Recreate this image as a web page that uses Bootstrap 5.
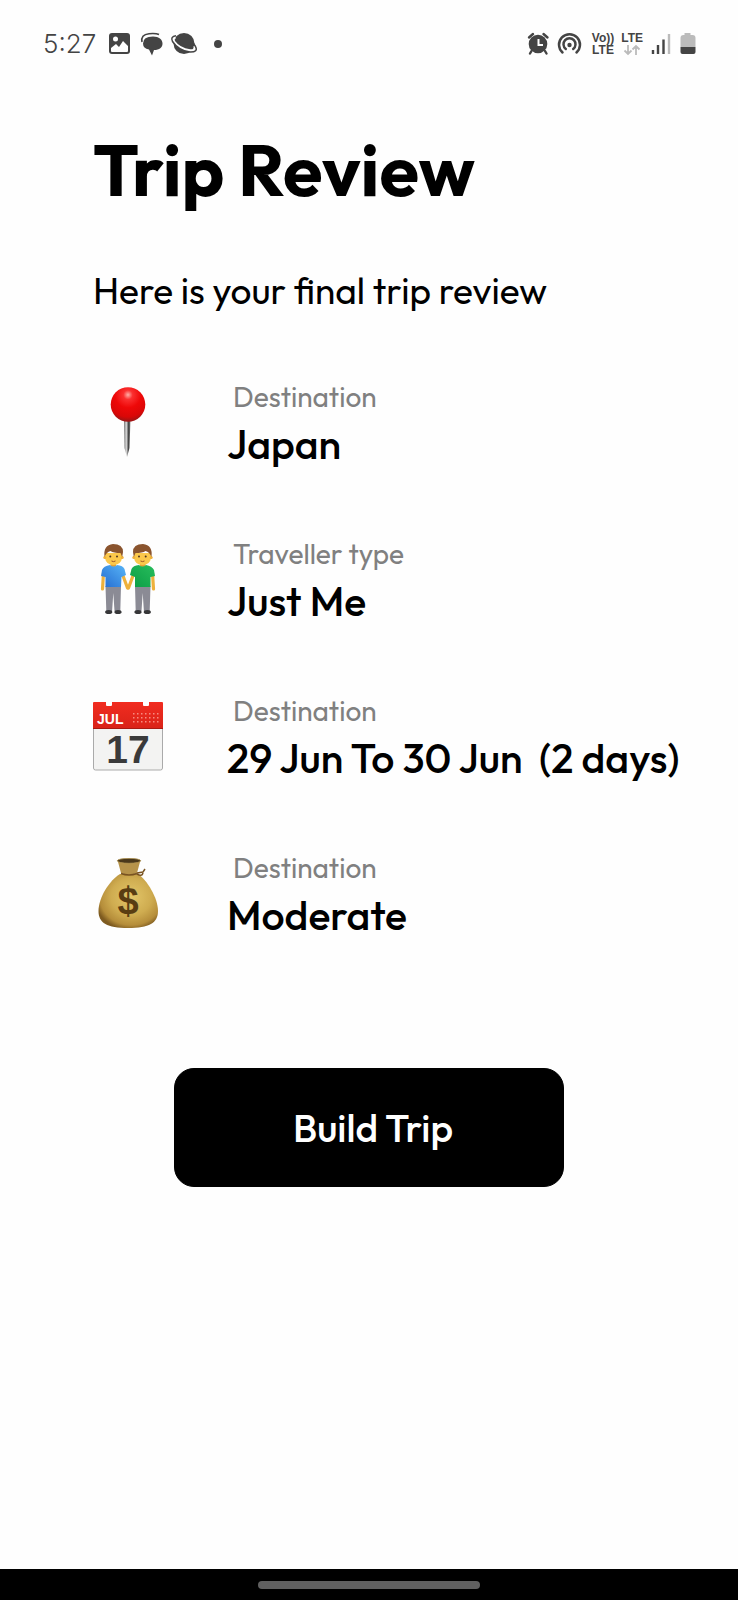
<!DOCTYPE html>
<html lang="en">
<head>
<meta charset="utf-8">
<meta name="viewport" content="width=device-width, initial-scale=1">
<title>Trip Review</title>
<link href="https://cdn.jsdelivr.net/npm/bootstrap@5.3.0/dist/css/bootstrap.min.css" rel="stylesheet">
<style>
  body { font-family: Outfit, Lato, "Open Sans", sans-serif; background: #fefefe; color: #000; }
  .status-bar { height: 88px; padding: 0 41px 0 43px; color: #444; font-family: Inter, Roboto, sans-serif; }
  .status-time { font: 300 26px/32px Inter, sans-serif; color: #444; }
  .network-label { font: 700 12px/12px "Liberation Sans", sans-serif; margin-left: 7px; }
  .screen { padding: 37px 24px 0 93px; }
  .screen-title { font-size: 72px; line-height: 90px; font-weight: 700; }
  .screen-intro { font-size: 37px; line-height: 46px; margin-top: 53px; }
  .review-list { margin-top: 64px; gap: 66px; }
  .review-item { gap: 64px; }
  .review-icon { width: 70px; height: 70px; margin-top: 9px; }
  .review-label { font-size: 28px; line-height: 38px; color: #808080; padding-left: 6px; margin-bottom: 3px; }
  .review-value { font-size: 41px; line-height: 50px; font-weight: 500; white-space: pre-wrap; }
  .build-wrap { margin: 128px 0 40px; }
  .btn-build { max-width: 390px; padding: 33px 20px 33px 28px; border-radius: 20px; font-size: 39px; line-height: 51px; font-weight: 500;
    --bs-btn-color: #fff; --bs-btn-bg: #000; --bs-btn-border-color: #000; --bs-btn-hover-color: #fff; --bs-btn-hover-bg: #222; }
  .gesture-bar { height: 31px; background: #000; }
  .gesture-pill { width: 30%; height: 8px; background: #606060; }
</style>
</head>
<body class="d-flex flex-column min-vh-100">
<header class="status-bar d-flex align-items-center justify-content-between">
  <div class="d-flex align-items-center">
    <span class="status-time">5:27</span>
    <svg class="ms-2" width="120" height="24" viewBox="0 0 120 24" fill="#444" aria-hidden="true">
      <rect x="5" y="1" width="21" height="21" rx="3"/>
      <circle cx="11.500" cy="7" r="2.500" fill="#fefefe"/>
      <path d="M7 19v-3l5-4 3 3 4-6 5 5v5q0 1-1 1H8q-1 0-1-1z" fill="#fefefe"/>
      <path d="M39 11.500q0-7 10-7c6 0 9.500 3 9.500 7s-3 6.500-8.500 6.500l-2 5.500-3-6q-6-1-6-6z"/>
      <path d="M38 10q-1.500-7.500 7-8.300 7-.6 10 .8" fill="none" stroke="#444" stroke-width="1.600"/>
      <circle cx="80" cy="11.500" r="10.500"/>
      <path d="M71.500 5.500q-3.500.5-1.500 4.200C73 14 79 17.500 86 18.500q7 .5 4.500-4.500" fill="none" stroke="#fefefe" stroke-width="2.600"/>
      <path d="M72 3.800q-6 .700-3.500 5.700C72 15 79 19.500 86 20q8.500 .2 5.500-5.500l-2-3" fill="none" stroke="#444" stroke-width="1.500"/>
      <circle cx="114" cy="12" r="4"/>
    </svg>
  </div>
  <div class="d-flex align-items-center">
    <svg width="58" height="24" viewBox="0 0 58 24" fill="none" stroke="#444" aria-hidden="true">
      <circle cx="11" cy="12" r="9.300" fill="#444" stroke="none"/>
      <path d="M2 5.500 6 2M16.500 2l4 3.500M4.500 19l-1.500 2.500M18 19l1.500 2.500" stroke-width="2.400" stroke-linecap="round"/>
      <path d="M11.500 7v6H16" stroke="#fefefe" stroke-width="2"/>
      <path d="M35.500 20.500A10.500 10.500 0 1 1 49.500 20.500M38.800 17A6 6 0 1 1 46.200 17" stroke-width="2.500" stroke-linecap="round"/>
      <circle cx="42.500" cy="13" r="2.200" fill="#444" stroke="none"/>
    </svg>
    <div class="network-label text-center">Vo))<br>LTE</div>
    <div class="network-label text-center">LTE
      <svg class="d-block mx-auto" width="18" height="12" viewBox="0 0 18 12" fill="none" stroke="#bbb" stroke-width="1.800" aria-hidden="true"><path d="M5 1v9M1.500 6.500 5 10l3.500-3.500M13 11V2M9.500 5.500 13 2l3.500 3.500"/></svg>
    </div>
    <svg class="ms-2" width="46" height="24" viewBox="0 0 46 24" aria-hidden="true">
      <path d="M2 18v4M7 13v9M12.500 7.500v14.500" stroke="#444" stroke-width="2.400"/>
      <path d="M18 2v20" stroke="#bbb" stroke-width="2.400"/>
      <path d="M33.500 1h6v2h2q3 0 3 3v9h-15V6q0-3 3-3h1z" fill="#bbb"/>
      <path d="M29.500 15h15v5q0 2-2 2h-11q-2 0-2-2z" fill="#444"/>
    </svg>
  </div>
</header>

<main class="screen">
  <h1 class="screen-title mb-0">Trip Review</h1>
  <p class="screen-intro mb-0">Here is your final trip review</p>

  <div class="review-list d-flex flex-column">
    <section class="review-item d-flex align-items-start">
      <svg class="review-icon flex-shrink-0" viewBox="0 0 70 70" aria-hidden="true">
        <defs>
          <linearGradient id="needle"><stop offset="0" stop-color="#666"/><stop offset=".35" stop-color="#ddd"/><stop offset=".7" stop-color="#444"/><stop offset="1" stop-color="#777"/></linearGradient>
          <radialGradient id="pinHead" cx=".5" cy=".22" r=".75"><stop offset="0" stop-color="#ffb0a8"/><stop offset=".18" stop-color="#fb3030"/><stop offset=".5" stop-color="#ee0808"/><stop offset=".85" stop-color="#d90707"/><stop offset="1" stop-color="#a31313"/></radialGradient>
        </defs>
        <path d="M31 31h6.500l-1 30-2.500 9-2.500-9z" fill="url(#needle)"/>
        <circle cx="35" cy="17.500" r="17.300" fill="url(#pinHead)"/>
      </svg>
      <div>
        <p class="review-label">Destination</p>
        <p class="review-value mb-0">Japan</p>
      </div>
    </section>

    <section class="review-item d-flex align-items-start">
      <svg class="review-icon flex-shrink-0" viewBox="0 0 70 70" aria-hidden="true">
        <defs>
          <linearGradient id="blueShirt" x1="0" y1="1" x2="1" y2="0"><stop offset="0" stop-color="#246bd0"/><stop offset="1" stop-color="#58b5f7"/></linearGradient>
          <linearGradient id="greenShirt" x1="0" y1="1" x2="1" y2="0"><stop offset="0" stop-color="#0b9c45"/><stop offset="1" stop-color="#28bd5c"/></linearGradient>
          <g id="person">
            <path d="M10.500 29 9.500 45M29 29l5.500 15" stroke="#eeb13c" stroke-width="3.200" stroke-linecap="round" fill="none"/>
            <path d="M12.500 42h15.500l-.7 25h-5.800l-1.200-18-1.200 18h-5.800z" fill="#8b8b95"/>
            <ellipse cx="15.700" cy="68" rx="3.600" ry="2" fill="#363638"/>
            <ellipse cx="25" cy="68" rx="3.600" ry="2" fill="#363638"/>
            <path d="M17.500 17h5.500v5q-2.500 3-5.500 0z" fill="#e5a332"/>
            <path d="M12 9h17v5q-1 7-8.500 7T12 14z" fill="#fbc84b"/>
            <circle cx="11.800" cy="13.500" r="1.500" fill="#efb13a"/><circle cx="29.200" cy="13.500" r="1.500" fill="#efb13a"/>
            <path d="M11.500 13Q10 1 20 0q10 0 10 8l-.8 5-1.700-4q-7 0-10-2-4 1-6 6z" fill="#8a542e"/>
            <circle cx="17.300" cy="12.500" r="1" fill="#513520"/><circle cx="24" cy="12.500" r="1" fill="#513520"/>
            <path d="M18.500 17q2 1.200 4 0" stroke="#9e5425" fill="none"/>
          </g>
        </defs>
        <use href="#person"/>
        <path d="M17 21q3.500 3 7 0 6 .5 7.500 4l1.500 6-4.500 2-.5 10H12.500V33l-4.500-1 1-6q1.500-4 8-5z" fill="url(#blueShirt)"/>
        <g transform="translate(70 0) scale(-1 1)"><use href="#person"/></g>
        <path d="M46 21q3.500 3 7 0 6 1 8 5l1 6-4.500 1v10H42V33l-5-2 1.500-6q1.500-3.500 7.500-4z" fill="url(#greenShirt)"/>
      </svg>
      <div>
        <p class="review-label">Traveller type</p>
        <p class="review-value mb-0">Just Me</p>
      </div>
    </section>

    <section class="review-item d-flex align-items-start">
      <svg class="review-icon flex-shrink-0" viewBox="0 0 70 70" aria-hidden="true">
        <defs>
          <linearGradient id="calRed" x2="0" y2="1"><stop offset="0" stop-color="#f12c20"/><stop offset="1" stop-color="#d92318"/></linearGradient>
          <pattern id="calDots" width="4" height="4" patternUnits="userSpaceOnUse"><rect width="1.500" height="1.500" fill="#f78b80"/></pattern>
        </defs>
        <path d="M.5 27h69v40q0 2-2 2h-65q-2 0-2-2z" fill="#f3f3f2" stroke="#aaa"/>
        <path d="M0 2q0-1 1-1h12v3q0 1 1 1h4q1 0 1-1V1h31v3q0 1 1 1h4q1 0 1-1V1h13q1 0 1 1v26H0z" fill="url(#calRed)"/>
        <path d="M0 27.500h70" stroke="#a91a12"/>
        <rect x="38" y="11" width="28" height="13" fill="url(#calDots)"/>
        <text x="4" y="23" font-family="Liberation Sans" font-weight="700" font-size="14" fill="#fff">JUL</text>
        <text x="35" y="62" text-anchor="middle" font-family="Liberation Sans" font-weight="700" font-size="39" fill="#3a3a3a">17</text>
      </svg>
      <div>
        <p class="review-label">Destination</p>
        <p class="review-value mb-0">29 Jun To 30 Jun  (2 days)</p>
      </div>
    </section>

    <section class="review-item d-flex align-items-start">
      <svg class="review-icon flex-shrink-0" viewBox="0 0 70 70" aria-hidden="true">
        <defs>
          <radialGradient id="bagGold" cx=".55" cy=".42" r=".62"><stop offset="0" stop-color="#e3c669"/><stop offset=".55" stop-color="#cfac50"/><stop offset=".85" stop-color="#b58d3a"/><stop offset="1" stop-color="#7e5b20"/></radialGradient>
        </defs>
        <path d="M27 16h18c9 6 20 24 20 37 0 12-9 17-30 17S5.500 65 5.500 53C5.500 39 17 22 27 16z" fill="url(#bagGold)"/>
        <path d="M24.500 2 28 15q8 3 16 0l3.500-13z" fill="#b6934a"/>
        <path d="M28 15.500q8 3 16 0M44 15l6-1 2-3M44 16q5 3 6-1" stroke="#795321" stroke-width="1.500" fill="none"/>
        <ellipse cx="36" cy="2.800" rx="11.700" ry="2.500" fill="#4a381b" stroke="#b29653" stroke-width=".8"/>
        <text x="35" y="56" text-anchor="middle" font-family="Liberation Sans" font-weight="700" font-size="38" fill="#593d12">$</text>
      </svg>
      <div>
        <p class="review-label">Destination</p>
        <p class="review-value mb-0">Moderate</p>
      </div>
    </section>
  </div>
</main>

<div class="build-wrap d-flex justify-content-center px-4">
  <button type="button" class="btn btn-build w-100">Build Trip</button>
</div>

<footer class="gesture-bar mt-auto d-flex align-items-center justify-content-center">
  <div class="gesture-pill rounded-pill"></div>
</footer>
<script src="https://cdn.jsdelivr.net/npm/bootstrap@5.3.0/dist/js/bootstrap.bundle.min.js"></script>
</body>
</html>
